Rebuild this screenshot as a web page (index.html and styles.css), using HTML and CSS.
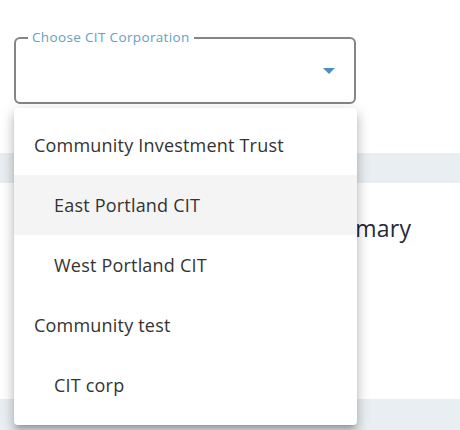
FILE: index.html
```html
<!DOCTYPE html>
<html>
<head>
<meta charset="utf-8">
<link rel="stylesheet" href="styles.css">
</head>
<body>
<div class="page">
  <div class="top">
    <div class="field">
      <span class="label">Choose CIT Corporation</span>
      <svg class="arrow" width="12" height="6" viewBox="0 0 12 6"><path d="M0 0 L12 0 L6 6 Z" fill="#4b8fc6"/></svg>
    </div>
  </div>
  <div class="band"></div>
  <div class="card">
    <h2 class="title">Portfolio Summary</h2>
  </div>
  <div class="band bottom"></div>

  <ul class="menu">
    <li class="item">Community Investment Trust</li>
    <li class="item sub active">East Portland CIT</li>
    <li class="item sub">West Portland CIT</li>
    <li class="item">Community test</li>
    <li class="item sub">CIT corp</li>
  </ul>
</div>
</body>
</html>
```

FILE: styles.css
```css
html, body {
  margin: 0;
  padding: 0;
  background: #ffffff;
  font-family: "Open Sans", "Noto Sans", sans-serif;
}
.page {
  position: relative;
  width: 460px;
  height: 430px;
  overflow: hidden;
}
.top {
  height: 153px;
  padding: 37px 0 0 14px;
  box-sizing: border-box;
}
.field {
  position: relative;
  width: 342px;
  height: 67px;
  box-sizing: border-box;
  border: 2px solid #858585;
  border-radius: 6px;
}
.label {
  position: absolute;
  top: -10px;
  left: 12px;
  padding: 0 4px;
  background: #fff;
  font-size: 13.5px;
  letter-spacing: 0.35px;
  color: #62a0c4;
  line-height: 16px;
}
.arrow {
  position: absolute;
  right: 19px;
  top: 29px;
}
.band {
  height: 30px;
  background: #e8eef1;
}
.card {
  height: 216px;
  background: #fff;
  padding-top: 30px;
  box-sizing: border-box;
}
.title {
  margin: 0 0 0 205px;
  font-size: 23px;
  font-weight: 500;
  letter-spacing: 0.3px;
  color: #262b36;
  line-height: 30px;
}
.band.bottom {
  height: 40px;
}
.menu {
  position: absolute;
  left: 14px;
  top: 108px;
  width: 343px;
  margin: 0;
  padding: 7px 0 10px;
  list-style: none;
  background: #fff;
  border-radius: 4px;
  box-shadow: 0 5px 5px -3px rgba(0,0,0,.2), 0 8px 10px 1px rgba(0,0,0,.14), 0 3px 14px 2px rgba(0,0,0,.12);
}
.item {
  height: 60px;
  line-height: 60px;
  padding-left: 20px;
  font-size: 18px;
  letter-spacing: 0.2px;
  color: #333333;
}
.item.sub {
  padding-left: 40px;
}
.item.active {
  background: #f4f4f4;
}
```
